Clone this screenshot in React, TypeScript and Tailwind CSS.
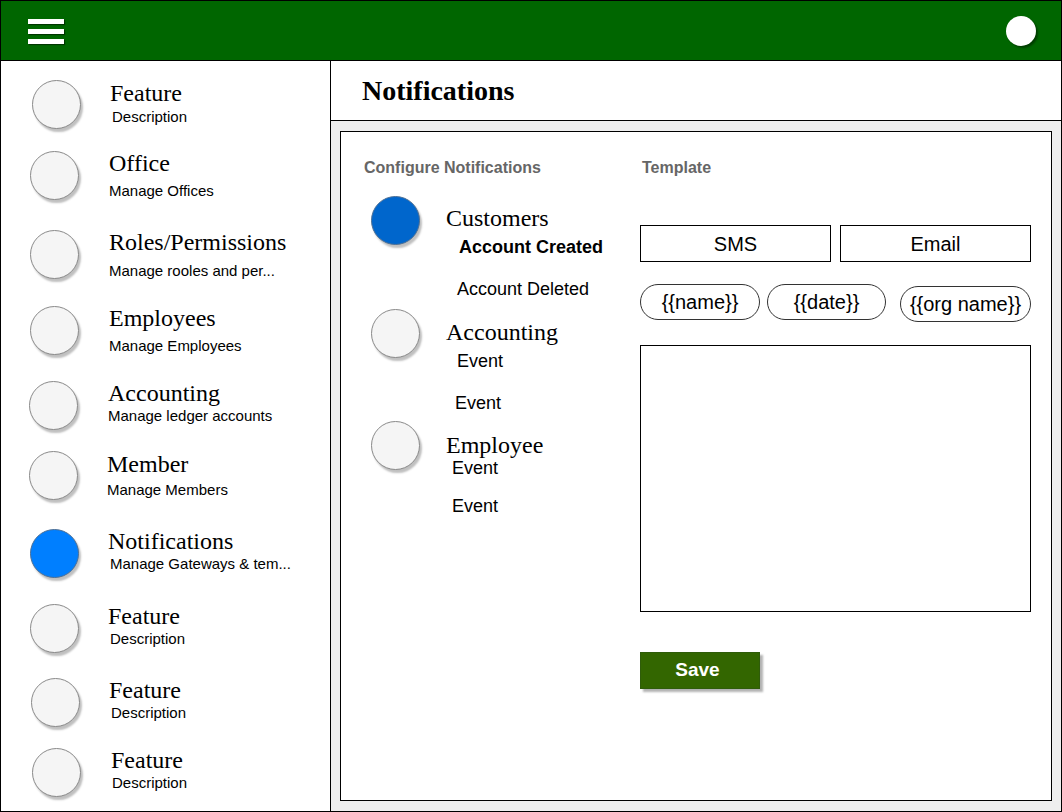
import React from "react";

interface NavItem {
  title: string;
  desc: string;
  active?: boolean;
  row: string; // top margin of the row
  circle: string; // left margin of the circle
  text: string; // left margin + top margin of the title block
  descCls: string; // offsets of the description line
}

const NAV: NavItem[] = [
  { title: "Feature", desc: "Description", row: "mt-[19px]", circle: "ml-[31px]", text: "ml-[29px] pt-[1px]", descCls: "mt-[4px] ml-[2px]" },
  { title: "Office", desc: "Manage Offices", row: "mt-[22px]", circle: "ml-[29px]", text: "ml-[30px]", descCls: "mt-[8px] ml-0" },
  { title: "Roles/Permissions", desc: "Manage rooles and per...", row: "mt-[30px]", circle: "ml-[29px]", text: "ml-[30px]", descCls: "mt-[9px] ml-0" },
  { title: "Employees", desc: "Manage Employees", row: "mt-[27px]", circle: "ml-[29px]", text: "ml-[30px]", descCls: "mt-[8px] ml-0" },
  { title: "Accounting", desc: "Manage ledger accounts", row: "mt-[26px]", circle: "ml-[28px]", text: "ml-[30px]", descCls: "mt-[3px] ml-0" },
  { title: "Member", desc: "Manage Members", row: "mt-[21px]", circle: "ml-[28px]", text: "ml-[29px] pt-[1px]", descCls: "mt-[6px] ml-0" },
  { title: "Notifications", desc: "Manage Gateways & tem...", active: true, row: "mt-[29px]", circle: "ml-[29px]", text: "ml-[29px]", descCls: "mt-[3px] ml-[2px]" },
  { title: "Feature", desc: "Description", row: "mt-[26px]", circle: "ml-[29px]", text: "ml-[29px]", descCls: "mt-[3px] ml-[2px]" },
  { title: "Feature", desc: "Description", row: "mt-[25px]", circle: "ml-[30px]", text: "ml-[29px]", descCls: "mt-[3px] ml-[2px]" },
  { title: "Feature", desc: "Description", row: "mt-[21px]", circle: "ml-[31px]", text: "ml-[30px]", descCls: "mt-[3px] ml-[1px]" },
];

const serif = "font-['Liberation_Serif',serif]";

const Circle = ({ color, className = "" }: { color?: string; className?: string }) => (
  <div
    className={`w-[49px] h-[49px] shrink-0 rounded-full border shadow-[2px_3px_2px_rgba(0,0,0,0.25)] ${
      color ?? "bg-[#f5f5f5] border-[#8a8a8a]"
    } ${className}`}
  />
);

const SideNav = () => (
  <div className="w-[330px] shrink-0 border-r border-black flex flex-col">
    {NAV.map((item, i) => (
      <div key={i} className={`flex items-start h-[49px] ${item.row}`}>
        <Circle
          className={item.circle}
          color={item.active ? "bg-[#007fff] border-[#4d6f94]" : undefined}
        />
        <div className={`flex flex-col whitespace-nowrap ${item.text}`}>
          <span className={`${serif} text-[24px] leading-[24px] text-black`}>{item.title}</span>
          <span className={`text-[15px] leading-[15px] text-black ${item.descCls}`}>{item.desc}</span>
        </div>
      </div>
    ))}
  </div>
);

// one notification group on the left of the panel
const Group = ({
  title,
  active,
  className,
  titleCls,
  events,
}: {
  title: string;
  active?: boolean;
  className: string;
  titleCls: string;
  events: { label: string; cls: string; bold?: boolean }[];
}) => (
  <div className={`flex items-start ml-[7px] ${className}`}>
    <Circle color={active ? "bg-[#0066cc] border-[#4d6f94]" : undefined} />
    <div className="flex flex-col ml-[26px] whitespace-nowrap">
      <span className={`${serif} text-[24px] leading-[24px] text-black ${titleCls}`}>{title}</span>
      {events.map((e, i) => (
        <span
          key={i}
          className={`text-[18px] leading-[18px] text-black ${e.bold ? "font-bold" : ""} ${e.cls}`}
        >
          {e.label}
        </span>
      ))}
    </div>
  </div>
);

const Pill = ({ label, className }: { label: string; className: string }) => (
  <div
    className={`h-[36px] shrink-0 rounded-full border border-[#333333] flex items-center justify-center text-[20px] text-black ${className}`}
  >
    {label}
  </div>
);

export default function App() {
  return (
    <div className="w-[1062px] h-[812px] border border-black bg-white flex flex-col font-['Liberation_Sans',Arial,sans-serif] text-black">
      {/* top bar */}
      <div className="h-[60px] shrink-0 bg-[#006600] border-b border-black flex items-center justify-between pl-[27px] pr-[25px]">
        <div className="flex flex-col gap-[5px] mt-[1px]">
          <div className="w-[36px] h-[5px] bg-white shadow-[1px_1px_1px_rgba(0,0,0,0.45)]" />
          <div className="w-[36px] h-[5px] bg-white shadow-[1px_1px_1px_rgba(0,0,0,0.45)]" />
          <div className="w-[36px] h-[5px] bg-white shadow-[1px_1px_1px_rgba(0,0,0,0.45)]" />
        </div>
        <div className="w-[30px] h-[30px] rounded-full bg-white shadow-[2px_2px_2px_rgba(0,0,0,0.4)]" />
      </div>

      <div className="flex-1 flex min-h-0">
        <SideNav />

        <div className="flex-1 flex flex-col">
          <div className="h-[60px] shrink-0 border-b border-black flex items-center pl-[31px]">
            <h1 className={`${serif} font-bold text-[28px] leading-[28px]`}>Notifications</h1>
          </div>

          <div className="flex-1 bg-[#eeeeee] pt-[10px] pb-[10px] pl-[9px] pr-[9px]">
            <div className="h-full border border-black bg-white flex pl-[23px] pt-[28px]">
              {/* configure column */}
              <div className="w-[276px] shrink-0 flex flex-col">
                <span className="text-[16px] leading-[16px] font-bold text-[#666666]">Configure Notifications</span>
                <Group
                  title="Customers"
                  active
                  className="mt-[20px]"
                  titleCls="mt-[10px]"
                  events={[
                    { label: "Account Created", cls: "mt-[8px] ml-[13px]", bold: true },
                    { label: "Account Deleted", cls: "mt-[24px] ml-[11px]" },
                  ]}
                />
                <Group
                  title="Accounting"
                  className="mt-[11px]"
                  titleCls="mt-[11px]"
                  events={[
                    { label: "Event", cls: "mt-[8px] ml-[11px]" },
                    { label: "Event", cls: "mt-[24px] ml-[9px]" },
                  ]}
                />
                <Group
                  title="Employee"
                  className="mt-[9px]"
                  titleCls="mt-[12px]"
                  events={[
                    { label: "Event", cls: "mt-[2px] ml-[6px]" },
                    { label: "Event", cls: "mt-[20px] ml-[6px]" },
                  ]}
                />
              </div>

              {/* template column */}
              <div className="w-[391px] shrink-0 flex flex-col">
                <span className="ml-[2px] text-[16px] leading-[16px] font-bold text-[#666666]">Template</span>
                <div className="mt-[49px] flex gap-[9px]">
                  <div className="w-[191px] h-[37px] border border-black flex items-center justify-center text-[20px]">SMS</div>
                  <div className="w-[191px] h-[37px] border border-black flex items-center justify-center text-[20px]">Email</div>
                </div>
                <div className="mt-[22px] flex items-start">
                  <Pill label="{{name}}" className="w-[120px]" />
                  <Pill label="{{date}}" className="w-[119px] ml-[7px]" />
                  <Pill label="{{org name}}" className="w-[131px] ml-[14px] mt-[2px]" />
                </div>
                <div className="mt-[23px] h-[267px] border border-black" />
                <button className="mt-[40px] w-[120px] h-[37px] bg-[#336600] border border-[#2f5c0a] text-white font-bold text-[19px] pr-[5px] shadow-[3px_3px_2px_rgba(0,0,0,0.3)] flex items-center justify-center">
                  Save
                </button>
              </div>
            </div>
          </div>
        </div>
      </div>
    </div>
  );
}
